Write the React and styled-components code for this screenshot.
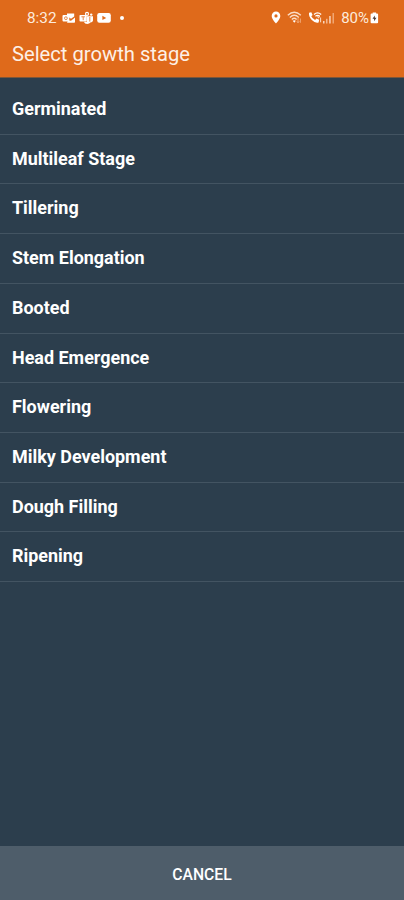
import React from 'react';
import styled, { createGlobalStyle } from 'styled-components';

const stages = [
    'Germinated',
    'Multileaf Stage',
    'Tillering',
    'Stem Elongation',
    'Booted',
    'Head Emergence',
    'Flowering',
    'Milky Development',
    'Dough Filling',
    'Ripening',
];

function OutlookIcon(){
    return(
        <Icon width="14" height="12" viewBox="0 0 14 12">
            <path d="M5 1.5h7.2v3L9 6.8 5 4z" fill="#fff" />
            <path d="M6 8.2l3 .6 4-3.4V10q0 .7-.8.7H5z" fill="#fff" />
            <rect x="0.5" y="3" width="6.8" height="6.4" rx="1" fill="#fff" />
            <circle cx="3.9" cy="6.2" r="1.4" fill="none" stroke="#e58a4c" strokeWidth="1" />
        </Icon>
    );
}

function TeamsIcon(){
    return(
        <Icon width="15" height="14" viewBox="0 0 15 14">
            <circle cx="8" cy="2.9" r="1.5" fill="none" stroke="#fff" strokeWidth="1.2" />
            <circle cx="12.2" cy="3.6" r="1.2" fill="#fff" />
            <path d="M8 5.3h6v4.2q-.3 2-2.6 2.1-1 1.3-3.2 1.3-2.5 0-3.4-2.2H8z" fill="#fff" />
            <path d="M10.8 6v4.6" stroke="#df6a1b" strokeWidth="0.8" />
            <rect x="0.5" y="4" width="7.3" height="6.5" rx="0.8" fill="#fff" />
            <path d="M2.4 5.8h3.5M4.2 5.8v3.4" stroke="#e58a4c" strokeWidth="1" />
        </Icon>
    );
}

function YoutubeIcon(){
    return(
        <Icon width="15" height="12" viewBox="0 0 15 12">
            <rect x="0.2" y="1" width="13.6" height="9.8" rx="2.2" fill="#fff" />
            <path d="M5.4 3.8v4.2L9.2 5.9z" fill="#df6a1b" />
        </Icon>
    );
}

function PinIcon(){
    return(
        <Icon width="10" height="13" viewBox="0 0 10 13">
            <path
                d="M5 .6a4.3 4.3 0 0 0-4.3 4.3C.7 8 5 12.4 5 12.4S9.3 8 9.3 4.9A4.3 4.3 0 0 0 5 .6zm0 2.7a1.6 1.6 0 1 1 0 3.2 1.6 1.6 0 0 1 0-3.2z"
                fill="#fff"
            />
        </Icon>
    );
}

function WifiIcon(){
    return(
        <Icon width="15" height="13" viewBox="0 0 15 13">
            <g fill="none" stroke="#fbdcc6" strokeWidth="1.4">
                <path d="M.8 4.2Q7.3-1.5 13.8 4.2" />
                <path d="M2.8 6.4Q7.3 2.3 11.8 6.4" />
                <path d="M4.8 8.5Q7.3 6.2 9.6 8.5" />
            </g>
            <path d="M5.7 9.8Q7.3 8.7 8.9 9.8L7.3 11.8z" fill="#fff" />
            <path d="M11 7v4.6M9.8 10.3l1.2 1.5 1.2-1.5M13.4 11.8V7.5" stroke="#f4b58b" strokeWidth="0.8" fill="none" />
        </Icon>
    );
}

function CallIcon(){
    return(
        <Icon width="14" height="13" viewBox="0 0 14 13">
            <path
                d="M1 1.8l2.3-.6 1.3 2.7-1.3 1.3q1.2 2.6 3.8 3.7l1.3-1.3 2.8 1.2-.6 2.6Q7.2 12.4 3.8 9 .6 5.8 1 1.8z"
                fill="#fff"
            />
            <path d="M6 3.4Q9.5.5 13.2 3.4M7.4 5.2q2.2-1.6 4.4 0" stroke="#fff" strokeWidth="1.3" fill="none" />
            <path d="M9.6 5l.9 2.2L11.6 5M12.6 6.5v4.8" stroke="#fbdcc6" strokeWidth="1" fill="none" />
        </Icon>
    );
}

function SignalIcon(){
    return(
        <Icon width="12" height="12" viewBox="0 0 12 12">
            <rect x="0" y="9" width="1.5" height="2.5" fill="#f9d4bb" />
            <rect x="3" y="6.8" width="1.5" height="4.7" fill="#f4b58b" />
            <rect x="6.2" y="4" width="1.5" height="7.5" fill="#f9d4bb" />
            <rect x="9.5" y="1" width="1.5" height="10.5" fill="#f1a672" />
        </Icon>
    );
}

function BatteryIcon(){
    return(
        <Icon width="9" height="12" viewBox="0 0 9 12">
            <path d="M2.7.4h3.4v1.2h1q1 0 1 1v7.6q0 1-1 1H1.6q-1 0-1-1V2.6q0-1 1-1h1.1z" fill="#fff" />
            <path d="M4.8 3.5L2.5 6.8h1.6v2.4l2.4-3.4H4.8z" fill="#4c3730" />
        </Icon>
    );
}

function App(){
    return(
        <Screen>
            <GlobalStyle />
            <Header>
                <StatusBar>
                    <Notifications>
                        <Clock>8:32</Clock>
                        <OutlookIcon />
                        <TeamsIcon />
                        <YoutubeIcon />
                        <Dot />
                    </Notifications>
                    <Indicators>
                        <PinIcon />
                        <WifiIcon />
                        <Cellular>
                            <CallIcon />
                            <SignalIcon />
                        </Cellular>
                        <Battery>
                            80%
                            <BatteryIcon />
                        </Battery>
                    </Indicators>
                </StatusBar>
                <Title>Select growth stage</Title>
            </Header>
            <StageList>
                {stages.map((stage) => (
                    <Stage key={stage}>{stage}</Stage>
                ))}
            </StageList>
            <CancelButton>CANCEL</CancelButton>
        </Screen>
    );
}

const GlobalStyle= createGlobalStyle`
    body {
        margin: 0;
        background-color: #2c3e4d;
    }
`;

const Screen= styled.div`
    display: flex;
    flex-direction: column;
    height: 900px;
    background-color: #2c3e4d;
    color: white;
    font-family: Roboto, sans-serif;
`;

const Header= styled.header`
    box-sizing: border-box;
    height: 78px;
    background-color: #df6a1b;
    border-bottom: 1px solid #7c5639;
`;

const StatusBar= styled.div`
    display: flex;
    justify-content: space-between;
    height: 35px;
    padding: 0 25px 0 27px;
    color: #fdeadd;
`;

const Notifications= styled.div`
    display: flex;
    align-items: center;
    gap: 3px;
`;

const Indicators= styled.div`
    display: flex;
    align-items: center;
    gap: 6px;
`;

const Icon= styled.svg`
    display: block;
    flex: none;
`;

const Clock= styled.span`
    width: 32px;
    font-size: 15.3px;
`;

const Dot= styled.span`
    width: 4px;
    height: 4px;
    margin-left: 5px;
    border-radius: 50%;
    background-color: white;
`;

const Cellular= styled.div`
    display: flex;
    align-items: center;
    gap: 1px;
`;

const Battery= styled.span`
    display: flex;
    align-items: center;
    gap: 1px;
    font-size: 15px;
`;

const Title= styled.h1`
    margin: 0;
    padding-left: 12px;
    font-size: 20.2px;
    font-weight: 400;
    line-height: 38px;
    color: #fdf0e6;
`;

const StageList= styled.ul`
    flex: 1;
    margin: 0;
    padding: 7px 0 0;
    list-style: none;
`;

const Stage= styled.li`
    box-sizing: border-box;
    height: 49.73px;
    padding-left: 12px;
    border-bottom: 1px solid #435462;
    font-size: 17.95px;
    font-weight: 700;
    line-height: 48.4px;
`;

const CancelButton= styled.button`
    height: 54px;
    padding: 2px 0 0;
    border: none;
    background-color: #4e5d6a;
    color: white;
    font-family: inherit;
    font-size: 15.7px;
    font-weight: 500;
`;

export default App;
